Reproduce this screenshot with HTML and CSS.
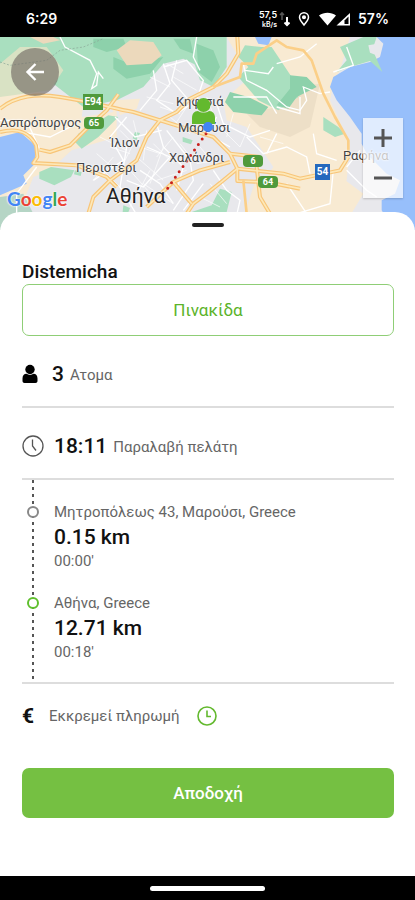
FILE: index.html
```html
<!DOCTYPE html>
<html lang="el">
<head>
    <meta charset="UTF-8" />
    <meta name="viewport" content="width=device-width, initial-scale=1.0"/>
    <title>Distemicha</title>
    <link rel="stylesheet" href="styles.css">
</head>
<body>
    <header class="status">
        <div class="clock">6:29</div>
        <div class="indicators">
            <div class="speed"><span>57,5</span><span class="unit">kB/s</span></div>
            <svg class="arrows" width="11" height="16" viewBox="0 0 11 16" fill="none" stroke-width="1.6">
                <path d="M3 9V2M1 4l2-2 2 2" stroke="#555"/>
                <path d="M8 6v8M5.500 11.500L8 14l2.500-2.500" stroke="#fff" stroke-width="2"/>
            </svg>
            <svg class="pin" width="12" height="16" viewBox="0 0 12 16" fill="none" stroke="#fff" stroke-width="1.500">
                <path d="M6 14C3 10.500 1.500 8.500 1.500 6.300a4.500 4.500 0 0 1 9 0C10.500 8.500 9 10.500 6 14z"/>
                <circle cx="6" cy="6.300" r="1.300" fill="#fff"/>
            </svg>
            <svg class="signal" width="32" height="16" viewBox="0 0 32 16">
                <path d="M0 4.500C5 .8 12 .8 17 4.500L8.500 14.500z" fill="#fff"/>
                <path d="M31 2v12.500H17.500z" fill="#fff"/>
                <path d="M29.500 5.500v7.500h-4V9.500z" fill="#000"/>
            </svg>
            <span class="battery">57%</span>
        </div>
    </header>

    <section class="map">
        <svg class="tiles" viewBox="0 0 1245 579" preserveAspectRatio="xMidYMin slice">
            <rect width="1245" height="579" fill="#e8e8ec"/>
            <!-- land -->
            <g fill="#f8ead2">
                <path d="M0 170L60 150 150 175 250 200 245 240 340 225 330 200 350 190 350 300 215 340 150 400 100 420 60 520 0 540z"/>
                <path d="M680 0h370l-30 100-20 40-10 50 60 130-10 110-80 110H800l-40-60 60-90-80-120-60-20-10-60 80-70z"/>
                <path d="M345 190l75-5-10 30-50 20z"/>
                <path d="M770 420l130 30 110-40 80 60-60 100H720z"/>
            </g>
            <path d="M740 230l90-20 60-60 70-10-30 130-60 30-90-30z" fill="#eddfc7"/>
            <!-- woods -->
            <g fill="#a9dfbf">
                <path d="M0 0h590l10 90-50-25-60 15-60 70-80 40-100 20-90-70-80-20-80 30z"/>
                <path d="M580 0h100v90l-40 60-40-20-20-60z"/>
                <path d="M735 25l50 5 30 0 60 90 20 60-60 40-60-30-60-70 30-30-30-30z"/>
                <path d="M660 455l35 10-20 80-90 25-10-45 60-20z"/>
                <path d="M235 290l90-55 30 5-60 60-50 35-20-20z"/>
                <path d="M118 405l35-15 70 10-10 20-50 25-45-20z"/>
                <path d="M0 480l70-10 30 60-10 49H0z" fill="#b5d5c5"/>
                <path d="M548 300l30 10-5 12-25-8zM405 285l15 3-10 22-12-6zM225 400l20 5-3 12-20-5zM370 505l20 8-8 20-14-8z"/>
                <path d="M970 240l45 30 20 20-30 10-35-20z"/>
            </g>
            <g fill="#8dd1ab">
                <path d="M690 165l55 15 60 30-20 25-85-10-25-30z"/>
                <path d="M340 60l50 20 100-20-40 50-70 15-40-30z"/>
                <path d="M870 115l50 5 30 30-60 30-25 35-35-10 40-50z"/>
                <path d="M280 5h90l10 25-60 15-40-15z"/>
                <path d="M520 5l50 0 10 45-40-15z"/>
                <path d="M590 20l50 20 20 50-25 45-40-30z"/>
            </g>
            <path d="M350 40l40-30 70 5 25 40-30 25-75 5z" fill="#ecd9bc"/>
            <path d="M0 80l60-50 80 0 50 70-40 60-150 20z" fill="#d9e2c4"/>
            <path d="M90 0h70l20 10-50 10z" fill="#ecd9bc"/>
            <!-- sea -->
            <g fill="#97bffb">
                <path d="M1130 0H1245V579H1180L1145 520 1145 490 1185 470 1200 430 1160 410 1130 380 1100 350 1085 320 1085 290 1050 240 1010 190 990 150 1000 120 1050 90 1110 75 1140 60 1150 20z"/>
                <path d="M0 300l60-15 45 40 0 55-35 35 10 25-80 35z"/>
                <path d="M765 0h50l-10 25-30-5z"/>
            </g>
            <path d="M1020 30L1090 0 1130 0 1120 30 1125 55 1147 105 1110 72 1050 90 1010 105 1040 70z" fill="#a9dfbf"/>
            <path d="M1105 25l45-8-20 20 5 20-25-10z" fill="#e8e8ec"/>
            <!-- streets -->
            <g fill="none" stroke="#fff" stroke-width="4">
                <path d="M180 0l15 30 75 40 20 40-15 45 15-10 5-40 15 20"/>
                <path d="M590 0l-10 60 20 40M490 80l20 60-40 50 60 40 60-40 20-60-50-60-70 20M530 70l-15 60 60 70M460 100l10 60-50 60"/>
                <path d="M730 80l10 50 60 30 60 50 40 10 20-30-10-40 50 20 30-5"/>
                <path d="M700 180l100 0 30 50M735 100l70 10 15-20"/>
                <path d="M380 240l-50 60 40 70-90 60M440 330l70 30-80 90-50-20M470 260l20 70 60 60-20 70M420 400l60 40 40 60M345 240l60 60 80-20M500 280l70 90 10 60-60 90M380 330l-20 120 60 100"/>
                <path d="M650 200l20 60 80 40 60-20M650 240l-30 50 70 40M740 300l50 50 70-20 60 30 10 50M830 290l-30 60M940 290l10 60 60 20M1080 340l-40 50M860 440l60 90M1000 400l-10 100-100 30M1040 400l60 60 30 20M610 440l-60 80M640 400l40 60 40 30-20 89"/>
                <path d="M0 250l80 0 40 90M110 390l-60 80 0 100M40 280l110 20 80-40M900 180l0 50-70-20"/>
                <path d="M830 80l70-20 50-40M1040 30l20 55-60 20"/>
            </g>
            <g fill="none" stroke="#fff" stroke-width="2">
                <path d="M360 280l40 40-30 60M400 250l20 80 60 20M440 280l-10 90M460 320l60 60M410 360l80 70M390 400l70 80M450 400l-60 110M490 330l-40 110M520 300l-50 60M540 320l40 50M430 440l90 60M560 400l-90 30M600 330l50 60M590 380l60-10M330 330l60 20M300 300l80 40M290 350l70 60M310 400l60 60M340 360l-60 70M510 240l60 50M560 210l-40 60M620 180l30 80M480 210l60 20"/>
                <path d="M500 80l50 30M450 120l60 30M520 120l70 40M440 180l80 20M660 270l60 60M700 230l-20 70M750 260l-30 70M780 300l70 20M630 440l50 60M600 480l60 30"/>
            </g>
            <path d="M0 75l30 10 110-15 40-30 70-10 60-25" fill="none" stroke="#8aa596" stroke-width="2" stroke-dasharray="6 5"/>
            <!-- motorways: wide edge first, pale middle over it -->
            <g class="road-edge">
                <path d="M0 215C50 175 110 170 180 180C280 195 340 215 400 225L560 275 640 300 690 350 712 395 712 432 800 435 900 455"/>
                <path d="M355 172L320 220 265 270 210 325 150 345 118 338"/>
                <path d="M0 285C60 270 90 290 108 325L112 360 100 378 230 385 320 420 350 450"/>
                <path d="M712 0L715 50 680 110 640 150 570 185 530 225 480 250 440 300 410 370 330 430 280 480 265 530"/>
                <path d="M712 395L670 430 620 470 580 500 560 530M690 350L780 360M770 390L780 480 810 530M690 375L600 400 520 435 440 510"/>
                <path d="M520 435L575 500M712 395L850 410 900 425 1020 400 1045 360"/>
            </g>
            <g class="road">
                <path d="M0 215C50 175 110 170 180 180C280 195 340 215 400 225L560 275 640 300 690 350 712 395 712 432 800 435 900 455"/>
                <path d="M355 172L320 220 265 270 210 325 150 345 118 338"/>
                <path d="M0 285C60 270 90 290 108 325L112 360 100 378 230 385 320 420 350 450"/>
                <path d="M712 0L715 50 680 110 640 150 570 185 530 225 480 250 440 300 410 370 330 430 280 480 265 530"/>
                <path d="M712 395L670 430 620 470 580 500 560 530M690 350L780 360M770 390L780 480 810 530M690 375L600 400 520 435 440 510"/>
                <path d="M520 435L575 500M712 395L850 410 900 425 1020 400 1045 360"/>
            </g>
            <path d="M640 150L720 120 725 80 760 80 770 50 830 10 860 30 910 40 935 70 970 170 1005 240 1045 310 1045 360M730 430L740 530" fill="none" stroke="#fbcf88" stroke-width="8" stroke-linejoin="round"/>
            <!-- route -->
            <path d="M618 290L500 458" fill="none" stroke="#c8201c" stroke-width="9" stroke-linecap="round" stroke-dasharray="0 20"/>
        </svg>
        <span class="place kifisia">Κηφισιά</span>
        <span class="place marousi">Μαρούσι</span>
        <span class="place aspropyrgos">Ασπρόπυργος</span>
        <span class="place ilion">Ίλιον</span>
        <span class="place peristeri">Περιστέρι</span>
        <span class="place chalandri">Χαλάνδρι</span>
        <span class="place rafina">Ραφήνα</span>
        <span class="place athina">Αθήνα</span>
        <span class="shield square e94">E94</span>
        <span class="shield r65">65</span>
        <span class="shield r6">6</span>
        <span class="shield r64">64</span>
        <span class="shield square blue r54">54</span>
        <svg class="client" width="26" height="35" viewBox="0 0 26 35">
            <path d="M2 27V21c0-4 2-7 6-7 3 2 8 2 11 0 4 0 6 3 6 7v6z" fill="#63b92e"/>
            <circle cx="13.500" cy="8" r="7" fill="#63b92e"/>
            <circle cx="18" cy="30" r="5" fill="#4285f4"/>
        </svg>
        <div class="google"><span class="g-blue">G</span><span class="g-red">o</span><span class="g-yellow">o</span><span class="g-blue">g</span><span class="g-green">l</span><span class="g-red">e</span></div>
        <button class="back" aria-label="Πίσω">
            <svg width="20" height="20" viewBox="0 0 20 20" fill="none" stroke="#fff" stroke-width="2.400">
                <path d="M19 10H3M10.500 2L2.500 10l8 8"/>
            </svg>
        </button>
        <div class="zoom">
            <button aria-label="Μεγέθυνση">
                <svg width="20" height="20" viewBox="0 0 20 20" stroke="#555" stroke-width="3"><path d="M1 10h18M10 1v18"/></svg>
            </button>
            <button aria-label="Σμίκρυνση">
                <svg width="20" height="20" viewBox="0 0 20 20" stroke="#555" stroke-width="3"><path d="M1 10h18"/></svg>
            </button>
        </div>
    </section>

    <main class="sheet">
        <div class="handle"></div>
        <h1>Distemicha</h1>
        <button class="btn plate">Πινακίδα</button>

        <div class="row">
            <svg class="icon person" width="16" height="20" viewBox="0 0 16 20">
                <circle cx="8" cy="5.500" r="4.700"/>
                <path d="M.5 17V14.500c0-3 1.500-4.700 4-4.700 2 1.500 5 1.500 7 0 2.500 0 4 1.700 4 4.700V17c0 1.200-.8 2-2 2h-11c-1.200 0-2-.8-2-2z"/>
            </svg>
            <strong>3</strong>
            <span class="label">Ατομα</span>
        </div>

        <div class="row">
            <svg class="icon" width="22" height="22" viewBox="0 0 22 22" fill="none" stroke="#555" stroke-width="1.300">
                <circle cx="11" cy="11" r="10"/>
                <path d="M10.500 4.500V11l3.500 4.500"/>
            </svg>
            <strong>18:11</strong>
            <span class="label">Παραλαβή πελάτη</span>
        </div>

        <ol class="stops">
            <li>
                <span class="dot"></span>
                <div>
                    <div class="address">Μητροπόλεως 43, Μαρούσι, Greece</div>
                    <div class="km">0.15 km</div>
                    <div class="duration">00:00'</div>
                </div>
            </li>
            <li>
                <span class="dot green"></span>
                <div>
                    <div class="address">Αθήνα, Greece</div>
                    <div class="km">12.71 km</div>
                    <div class="duration">00:18'</div>
                </div>
            </li>
        </ol>

        <div class="payment">
            <span class="euro">€</span>
            <span class="label">Εκκρεμεί πληρωμή</span>
            <svg width="20" height="20" viewBox="0 0 20 20" fill="none" stroke="#63b92e" stroke-width="1.600">
                <circle cx="10" cy="10" r="9"/>
                <path d="M10 4.500V10.500h4"/>
            </svg>
        </div>

        <button class="btn accept">Αποδοχή</button>
    </main>

    <footer class="navbar"><div class="pill"></div></footer>
</body>
</html>
```
FILE: styles.css
```css
        * {
            box-sizing: border-box;
        }

        body {
            margin: 0;
            min-height: 100vh;
            display: flex;
            flex-direction: column;
            font-family: Roboto, sans-serif;
            background: #fff;
            color: #111;
        }

        button {
            font-family: inherit;
            cursor: pointer;
        }

        .status {
            display: flex;
            justify-content: space-between;
            align-items: center;
            height: 37px;
            padding: 0 26px;
            background: #000;
            color: #fff;
            font-family: Inter, sans-serif;
            font-size: 14px;
            font-weight: 600;
        }

        .indicators {
            display: flex;
            align-items: center;
        }

        .speed {
            display: flex;
            flex-direction: column;
            align-items: flex-end;
            font-size: 9px;
            line-height: 11px;
        }

        .speed .unit {
            font-size: 7px;
            line-height: 9px;
        }

        .arrows {
            margin-left: 2px;
        }

        .pin {
            margin: 0 9px 0 8px;
        }

        .signal {
            margin-right: 7px;
        }

        /* Map */
        .map {
            position: relative;
            height: 193px;
            overflow: hidden;
            background: #e8e8ec;
        }

        .tiles {
            display: block;
            width: 100%;
            height: 100%;
        }

        .road-edge,
        .road {
            fill: none;
            stroke-linejoin: round;
        }

        .road-edge {
            stroke: #f8c578;
            stroke-width: 12;
        }

        .road {
            stroke: #fde8b8;
            stroke-width: 5;
        }

        .place {
            position: absolute;
            font-size: 13px;
            line-height: 16px;
            color: #444;
            white-space: nowrap;
            text-shadow: 0 0 2px #fff, 0 0 2px #fff;
        }

        .kifisia { left: 176px; top: 57px; }
        .marousi { left: 178px; top: 83px; }
        .aspropyrgos { left: 0; top: 78px; }
        .ilion { left: 110px; top: 98px; }
        .peristeri { left: 76px; top: 123px; }
        .chalandri { left: 169px; top: 113px; }
        .rafina { left: 343px; top: 111px; }

        .athina {
            left: 106px;
            top: 147px;
            font-size: 21px;
            line-height: 24px;
            color: #222;
        }

        .shield {
            position: absolute;
            width: 20px;
            height: 12px;
            border-radius: 4px;
            background: #4f9a3c;
            color: #fff;
            font-size: 9px;
            font-weight: 700;
            line-height: 12px;
            text-align: center;
        }

        .shield.square {
            width: 20px;
            height: 16px;
            border-radius: 0;
            font-size: 10px;
            line-height: 16px;
        }

        .shield.blue {
            width: 15px;
            background: #2468bd;
        }

        .e94 { left: 83px; top: 57px; }
        .r65 { left: 84px; top: 80px; }
        .r6 { left: 243px; top: 118px; }
        .r64 { left: 258px; top: 139px; }
        .r54 { left: 315px; top: 127px; }

        .client {
            position: absolute;
            left: 190px;
            top: 60px;
        }

        .google {
            position: absolute;
            left: 7px;
            top: 150px;
            font-family: Lato, sans-serif;
            font-size: 19px;
            font-weight: 700;
            line-height: 24px;
            text-shadow: 0 0 2px #fff, 0 0 2px #fff;
        }

        .g-blue { color: #4285f4; }
        .g-red { color: #ea4335; }
        .g-yellow { color: #fbbc05; }
        .g-green { color: #34a853; }

        .back {
            position: absolute;
            left: 11px;
            top: 11px;
            width: 48px;
            height: 48px;
            padding: 0;
            display: flex;
            align-items: center;
            justify-content: center;
            border: none;
            border-radius: 50%;
            background: rgba(115, 108, 102, 0.65);
        }

        .zoom {
            position: absolute;
            right: 12px;
            top: 81px;
            width: 40px;
            background: rgba(255, 255, 255, 0.7);
            box-shadow: 0 1px 2px rgba(0, 0, 0, 0.2);
        }

        .zoom button {
            display: flex;
            align-items: center;
            justify-content: center;
            width: 40px;
            height: 40px;
            padding: 0;
            border: none;
            background: none;
        }

        /* Order sheet */
        .sheet {
            position: relative;
            flex: 1;
            display: flex;
            flex-direction: column;
            margin-top: -18px;
            padding: 11px 21px 56px 22px;
            border-radius: 20px 20px 0 0;
            background: #fff;
        }

        .handle {
            align-self: center;
            width: 32px;
            height: 4px;
            border-radius: 2px;
            background: #222;
        }

        h1 {
            margin: 33px 0 0;
            font-size: 19px;
            font-weight: 500;
            line-height: 24px;
        }

        .btn {
            width: 100%;
            border-radius: 7px;
            font-size: 17px;
        }

        .plate {
            height: 52px;
            border: 1px solid #8fce76;
            background: #fff;
            color: #5bb32a;
        }

        .row {
            display: flex;
            align-items: center;
            padding: 24px 0 18px;
            border-bottom: 2px solid #ddd;
            line-height: 28px;
        }

        .icon {
            margin-right: 10px;
        }

        .icon.person {
            margin-right: 14px;
        }

        .row strong,
        .km {
            font-size: 21px;
            font-weight: 500;
        }

        .row strong {
            margin-right: 6px;
        }

        .label,
        .address,
        .duration {
            font-size: 15px;
            color: #666;
        }

        .row .label {
            padding-top: 3px;
            line-height: 25px;
        }

        /* the dashed line runs behind the dots */
        .stops {
            display: flex;
            flex-direction: column;
            gap: 23px;
            margin: 0;
            padding: 22px 0 21px;
            list-style: none;
            border-bottom: 2px solid #ddd;
            background: repeating-linear-gradient(#555 0 3px, transparent 3px 7px) 10px 0 / 2px 100% no-repeat;
        }

        .stops li {
            display: flex;
        }

        .dot {
            flex: none;
            width: 12px;
            height: 12px;
            margin: 4px 15px 0 5px;
            border: 2px solid #888;
            border-radius: 50%;
            background: #fff;
        }

        .dot.green {
            border-color: #5fbf2d;
        }

        .address {
            line-height: 20px;
        }

        .km {
            line-height: 30px;
        }

        .duration {
            line-height: 18px;
        }

        .payment {
            display: flex;
            align-items: center;
            padding: 18px 0 38px;
            line-height: 28px;
        }

        .euro {
            width: 27px;
            font-size: 21px;
            font-weight: 700;
        }

        .payment svg {
            margin-left: 17px;
        }

        .accept {
            height: 50px;
            border: none;
            background: #75c042;
            color: #fff;
            font-weight: 500;
        }

        .navbar {
            display: flex;
            align-items: center;
            justify-content: center;
            height: 24px;
            background: #000;
        }

        .pill {
            width: 115px;
            height: 5px;
            border-radius: 3px;
            background: #fff;
        }
```
